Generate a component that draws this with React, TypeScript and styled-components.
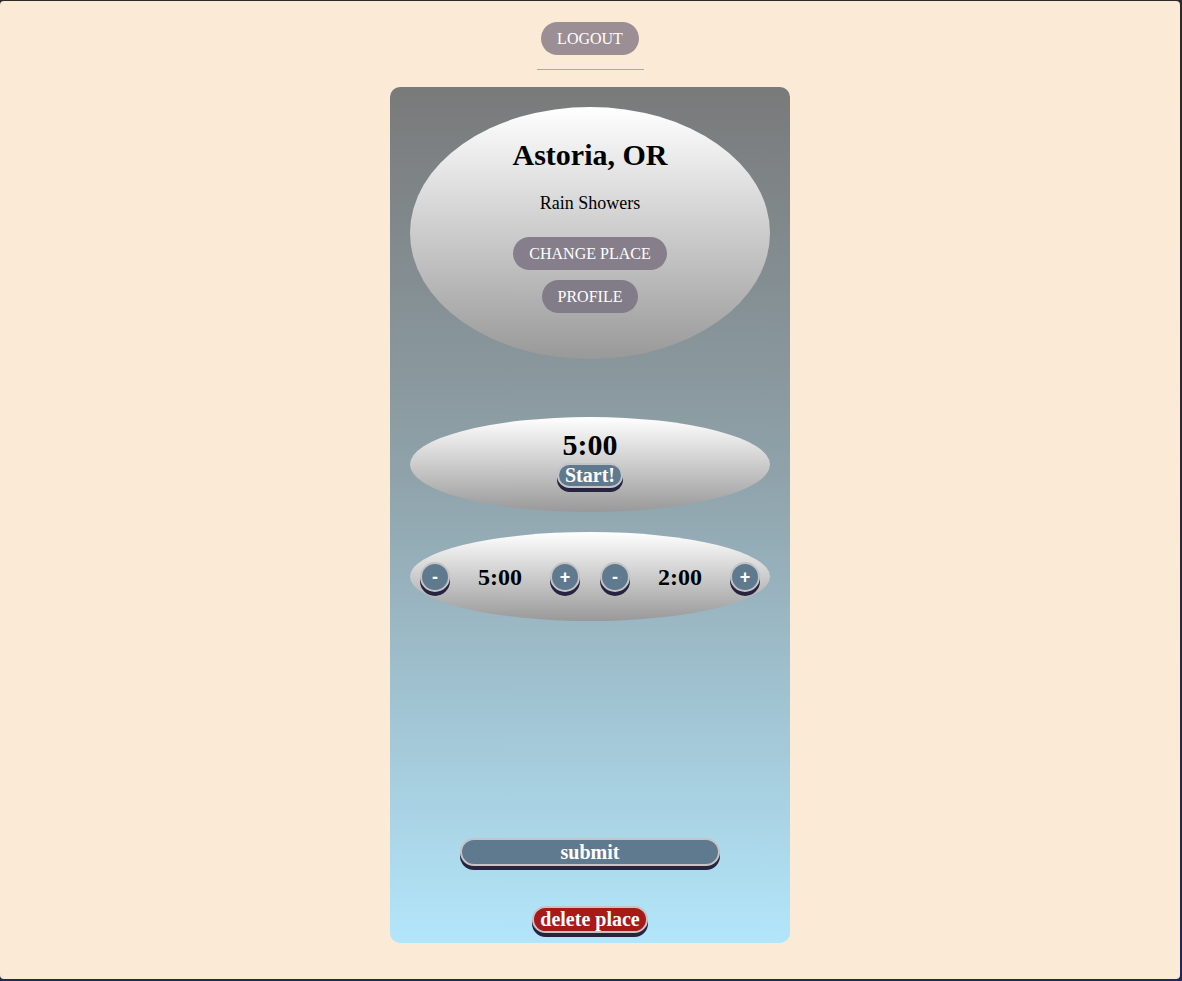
import React from "react";
import styled, { createGlobalStyle } from "styled-components";

const Global = createGlobalStyle`
  html, body {
    margin: 0;
    padding: 0;
  }
  body {
    background: linear-gradient(#2b2b2b 0, #1d2a57 100%);
    min-height: 981px;
    font-family: "Liberation Serif", "Times New Roman", serif;
  }
`;

const Page = styled.div`
  margin-top: 1px;
  width: 1180px;
  height: 978px;
  background: #fbebd6;
  border-radius: 4px;
  display: flex;
  flex-direction: column;
  align-items: center;
  padding-top: 21px;
  box-sizing: border-box;
`;

const PillButton = styled.button<{ $bg: string }>`
  font-family: "Liberation Serif", "Times New Roman", serif;
  font-size: 16px;
  line-height: 19px;
  color: #ffffff;
  background: ${(p) => p.$bg};
  border: none;
  border-radius: 17px;
  height: 33px;
  padding: 0 16px;
  cursor: pointer;
`;

const Rule = styled.div`
  width: 107px;
  height: 1px;
  background: #a7a9ad;
  margin-top: 14px;
`;

const Card = styled.div`
  margin-top: 17px;
  width: 400px;
  height: 856px;
  border-radius: 10px;
  background: linear-gradient(#797a7a 0%, #8fa2aa 45%, #b3e6fb 100%);
  display: flex;
  flex-direction: column;
  align-items: center;
  padding: 20px 0 10px;
  box-sizing: border-box;
`;

const Ellipse = styled.div<{ $h: number; $mt?: number }>`
  width: 360px;
  height: ${(p) => p.$h}px;
  margin-top: ${(p) => p.$mt ?? 0}px;
  border-radius: 50%;
  background: linear-gradient(#ffffff, #999999);
  display: flex;
  flex-direction: column;
  align-items: center;
  box-sizing: border-box;
  flex-shrink: 0;
`;

const PlaceInfo = styled(Ellipse)`
  padding-top: 31px;
`;

const Title = styled.h1`
  margin: 0;
  font-size: 30px;
  line-height: 34px;
  font-weight: bold;
  color: #000;
`;

const Subtitle = styled.p`
  margin: 21px 0 0;
  font-size: 18px;
  line-height: 21px;
  color: #000;
`;

const ButtonStack = styled.div`
  margin-top: 23px;
  display: flex;
  flex-direction: column;
  align-items: center;
  gap: 10px;
`;

const TimerBox = styled(Ellipse)`
  padding-top: 11px;
`;

const TimeBig = styled.div`
  font-size: 30px;
  line-height: 34px;
  font-weight: bold;
  color: #000;
`;

const ActionButton = styled.button<{ $bg?: string; $w?: number; $lh?: number }>`
  font-family: "Liberation Serif", "Times New Roman", serif;
  font-weight: bold;
  font-size: 20px;
  line-height: ${(p) => p.$lh ?? 22}px;
  color: #ffffff;
  background: ${(p) => p.$bg ?? "#5f7a8f"};
  border: 2px solid #c4c4c6;
  border-radius: 14px;
  box-shadow: 0 4px 0 #272340;
  padding: 0 6px;
  width: ${(p) => (p.$w ? `${p.$w}px` : "auto")};
  cursor: pointer;
`;

const StartButton = styled(ActionButton)`
  margin-top: 1px;
`;

const SettingsBox = styled(Ellipse)`
  flex-direction: row;
  align-items: center;
  padding-left: 10px;
  gap: 20px;
`;

const Adjuster = styled.div`
  display: flex;
  align-items: center;
`;

const RoundButton = styled.button`
  width: 30px;
  height: 30px;
  border-radius: 50%;
  border: 2px solid #c4c4c6;
  background: #5f7a8f;
  box-shadow: 0 4px 0 #272340;
  color: #fff;
  font-family: "Liberation Sans", Arial, sans-serif;
  font-weight: bold;
  font-size: 18px;
  line-height: 24px;
  padding: 0;
  display: flex;
  align-items: center;
  justify-content: center;
  cursor: pointer;
`;

const TimeSmall = styled.div`
  width: 100px;
  text-align: center;
  font-size: 24px;
  line-height: 28px;
  font-weight: bold;
  color: #000;
`;

const SubmitButton = styled(ActionButton)`
  margin-top: auto;
`;

const DeleteButton = styled(ActionButton)`
  margin-top: 40px;
`;

export default function App() {
  return (
    <>
      <Global />
      <Page>
        <PillButton $bg="#9b8f95">LOGOUT</PillButton>
        <Rule />
        <Card>
          <PlaceInfo $h={252}>
            <Title>Astoria, OR</Title>
            <Subtitle>Rain Showers</Subtitle>
            <ButtonStack>
              <PillButton $bg="#867f8b">CHANGE PLACE</PillButton>
              <PillButton $bg="#827c88">PROFILE</PillButton>
            </ButtonStack>
          </PlaceInfo>
          <TimerBox $h={95} $mt={58}>
            <TimeBig>5:00</TimeBig>
            <StartButton $lh={21}>Start!</StartButton>
          </TimerBox>
          <SettingsBox $h={89} $mt={20}>
            <Adjuster>
              <RoundButton>-</RoundButton>
              <TimeSmall>5:00</TimeSmall>
              <RoundButton>+</RoundButton>
            </Adjuster>
            <Adjuster>
              <RoundButton>-</RoundButton>
              <TimeSmall>2:00</TimeSmall>
              <RoundButton>+</RoundButton>
            </Adjuster>
          </SettingsBox>
          <SubmitButton $w={260} $lh={24}>submit</SubmitButton>
          <DeleteButton $bg="#a8191a" $lh={23}>delete place</DeleteButton>
        </Card>
      </Page>
    </>
  );
}
